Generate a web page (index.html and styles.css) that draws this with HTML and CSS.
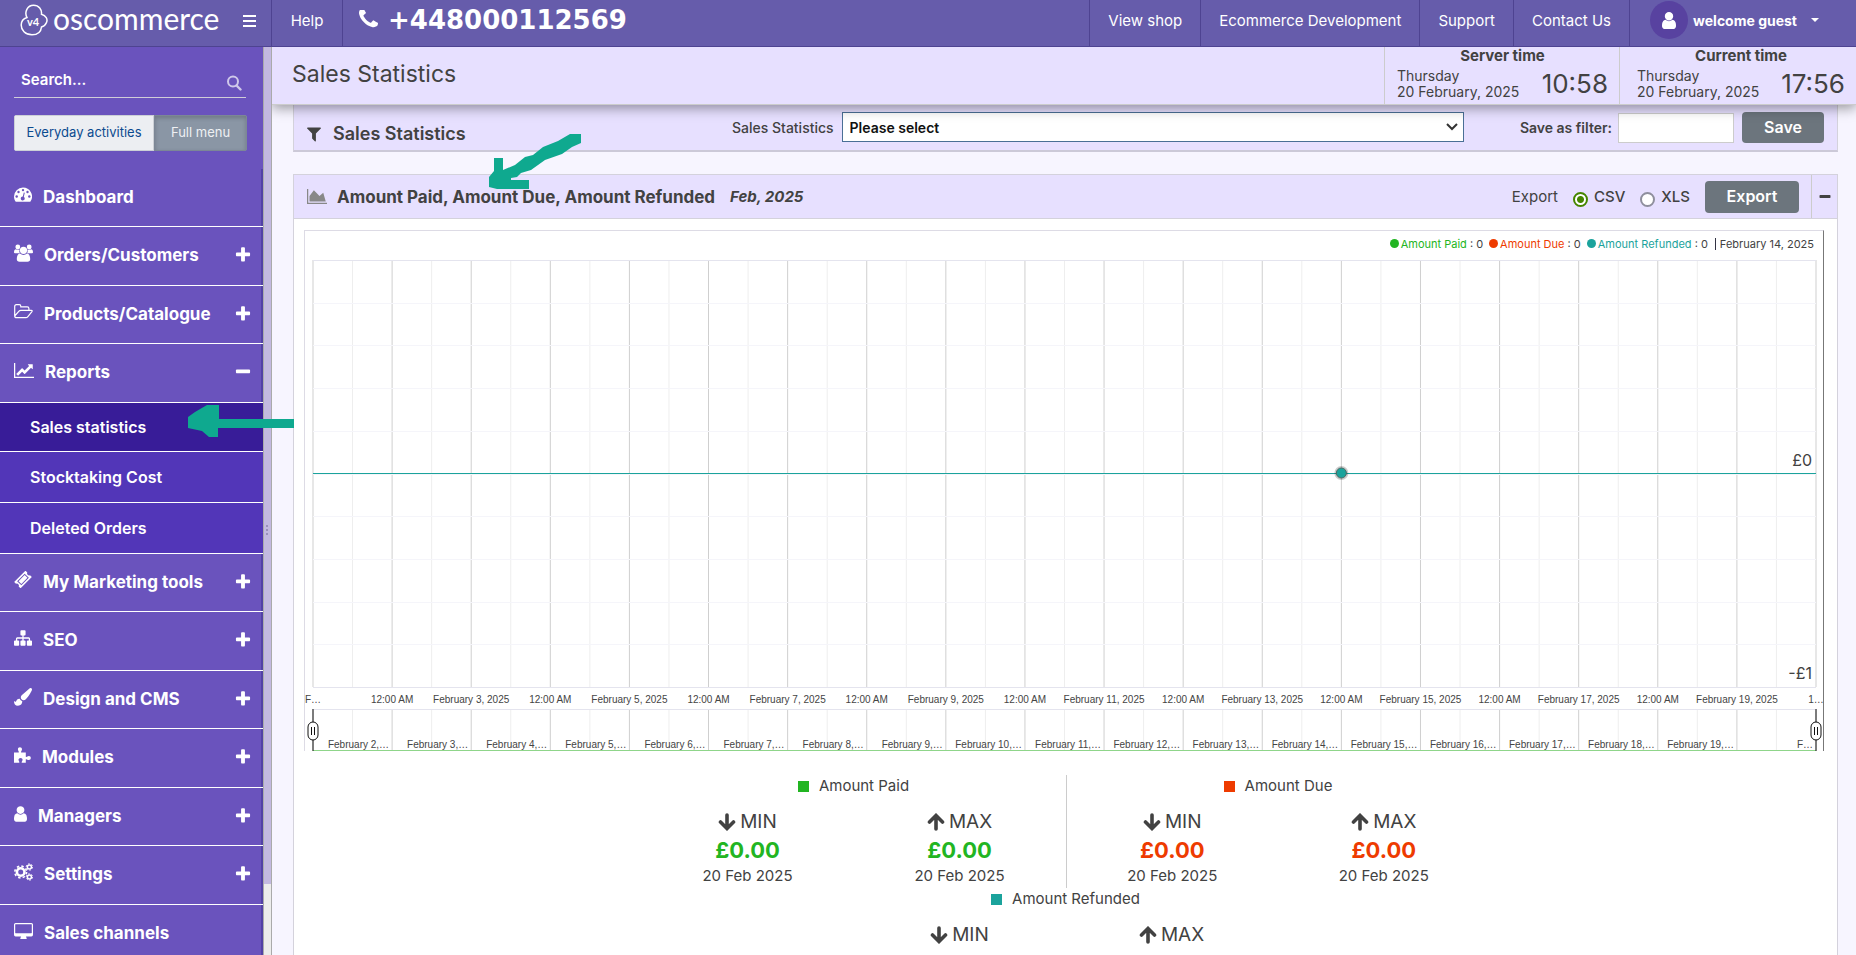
FILE: index.html
```html
<!DOCTYPE html>
<html lang="en">
<head>
<meta charset="utf-8">
<title>Sales Statistics</title>
<link rel="stylesheet" href="styles.css">
</head>
<body>
<svg class="sprite" aria-hidden="true">
  <symbol id="plus" viewBox="0 0 1792 1792"><path d="M1600 736v192q0 40-28 68t-68 28h-416v416q0 40-28 68t-68 28h-192q-40 0-68-28t-28-68v-416h-416q-40 0-68-28t-28-68v-192q0-40 28-68t68-28h416v-416q0-40 28-68t68-28h192q40 0 68 28t28 68v416h416q40 0 68 28t28 68z"/></symbol>
  <symbol id="minus" viewBox="0 0 1792 1792"><path d="M1600 736v192q0 40-28 68t-68 28h-1216q-40 0-68-28t-28-68v-192q0-40 28-68t68-28h1216q40 0 68 28t28 68z"/></symbol>
  <symbol id="user" viewBox="256 128 1280 1536"><path d="M1536 1399q0 109-62.500 187t-150.500 78h-854q-88 0-150.500-78t-62.500-187q0-85 8.500-160.500t31.500-152 58.500-131 94-89 134.500-34.500q131 128 313 128t313-128q76 0 134.500 34.500t94 89 58.500 131 31.500 152 8.500 160.500zm-256-887q0 159-112.500 271.500t-271.500 112.500-271.500-112.500-112.500-271.500 112.500-271.500 271.500-112.500 271.500 112.500 112.500 271.500z"/></symbol>
  <symbol id="down" viewBox="0 0 18 18"><path d="M9 2v13M2.500 9L9 15.500 15.500 9" fill="none" stroke="currentColor" stroke-width="3.600" stroke-linecap="round"/></symbol>
  <symbol id="up" viewBox="0 0 18 18"><path d="M9 16V3M2.500 9L9 2.500 15.500 9" fill="none" stroke="currentColor" stroke-width="3.600" stroke-linecap="round"/></symbol>
</svg>

<header class="topbar">
  <div class="brand">
    <a class="logo" href="#">
      <svg width="28" height="32" viewBox="0 0 28 32" aria-hidden="true">
        <path d="M7 13.500C4 8 7.500 1.200 13.500 1.200c5.500 0 8.500 4.300 8 9C26 11.500 28 15 26.500 18.500c-1 2.500-3 4-5 4.500C21 28 17.500 30.800 12 30.800 5 30.800 1.200 26 1.200 21 1.200 17 4 14.500 7 13.500z" fill="none" stroke="#fff" stroke-width="1.500"/>
        <text x="13" y="22" text-anchor="middle" class="logo-version">v4</text>
      </svg>
      <span class="logo-name">oscommerce</span>
    </a>
    <button class="burger" aria-label="Toggle menu"><span></span><span></span><span></span></button>
  </div>
  <nav class="top-left">
    <a href="#" class="help">Help</a>
    <a href="#" class="phone"><svg width="19" height="19" viewBox="192 256 1408 1408" aria-hidden="true"><path d="M1600 1240q0 27-10 70.500t-21 68.500q-21 50-122 106-94 51-186 51-27 0-52.500-3.500t-57.500-12.500-47.500-14.500-55.500-20.500-49-18q-98-35-175-83-128-79-264.500-215.500t-215.500-264.500q-48-77-83-175-3-9-18-49t-20.500-55.500-14.500-47.500-12.500-57.500-3.500-52.500q0-92 51-186 56-101 106-122 25-11 68.500-21t70.500-10q14 0 21 3 18 6 53 76 11 19 30 54t35 63.500 31 53.500q3 4 17.500 25t21.500 35.500 7 28.500q0 20-28.500 50t-62 55-62 53-28.500 46q0 9 5 22.500t8.500 20.500 14 24 11.500 19q76 137 174 235t235 174q2 1 19 11.500t24 14 20.500 8.500 22.500 5q18 0 46-28.500t53-62 55-62 50-28.500q14 0 28.500 7t35.500 21.500 25 17.500q25 15 53.500 31t63.500 35 54 30q70 35 76 53 3 7 3 21z"/></svg>+448000112569</a>
  </nav>
  <nav class="top-right">
    <a href="#">View shop</a>
    <a href="#">Ecommerce Development</a>
    <a href="#">Support</a>
    <a href="#">Contact Us</a>
    <button class="account"><span class="avatar"><svg width="14" height="17"><use href="#user"/></svg></span>welcome guest<i class="caret"></i></button>
  </nav>
</header>

<div class="body">
  <aside class="sidebar">
    <div class="search">
      <input type="text" placeholder="Search..." aria-label="Search">
      <svg width="16" height="16" viewBox="0 0 16 16" aria-hidden="true"><circle cx="7" cy="6.500" r="5" fill="none" stroke="#cfc8ea" stroke-width="2"/><path d="M10.500 10.500l4 4" stroke="#cfc8ea" stroke-width="2.400" stroke-linecap="round"/></svg>
    </div>
    <div class="switch">
      <button>Everyday activities</button><button class="on">Full menu</button>
    </div>
    <ul class="menu">
      <li><a href="#"><svg width="18" height="15" viewBox="0 0 18 15"><path d="M9 .5a9 9 0 0 0-9 9c0 1.800.5 3.400 1.400 4.800.2.400.5.500.9.500h13.400c.4 0 .7-.1.900-.5A9 9 0 0 0 9 .5z"/><g class="cut"><circle cx="2.700" cy="9.500" r="1.200"/><circle cx="4.500" cy="5" r="1.200"/><circle cx="9" cy="3.100" r="1.200"/><circle cx="13.500" cy="5" r="1.200"/><circle cx="15.300" cy="9.500" r="1.200"/><path d="M9.800 5.500l1 .3-1 4a2 2 0 1 1-1-.3z"/></g></svg>Dashboard</a></li>
      <li><a href="#"><svg width="19" height="18" viewBox="0 0 19 18"><circle cx="3.800" cy="3" r="2.400"/><circle cx="15.200" cy="3" r="2.400"/><path d="M0 8.500C0 6 .8 5.200 2 5.200c1 .8 2.500.8 3.600.2C5 7.500 5.500 8.500 6 9.300H1.500C.5 9.300 0 9 0 8.500zM19 8.500c0-2.500-.8-3.300-2-3.300-1 .8-2.500.8-3.600.2.600 2.100.1 3.100-.4 3.900h4.500c1 0 1.500-.3 1.500-.8z"/><circle cx="9.500" cy="6.300" r="3.600"/><path d="M5.500 17.800c-1.700 0-2.700-1-2.700-2.500 0-3.200 1-5.500 3.200-5.700 2 1.800 5 1.800 7 0 2.200.2 3.200 2.500 3.200 5.700 0 1.500-1 2.500-2.700 2.500z"/></svg>Orders/Customers</a><svg class="toggle"><use href="#plus"/></svg></li>
      <li><a href="#"><svg width="19" height="15" viewBox="0 0 19 15"><path d="M.7 12V2.500Q.7.700 2.400.7h2.800Q6.800.7 6.800 2.300v.6h6.400q1.700 0 1.700 1.700v1.800M.7 12L5 7.200q.7-.8 1.800-.8h10.500q1.500 0 .6 1.200l-4 5q-.9 1.100-2 1.100H2.400Q.7 13.700.7 12z" fill="none" stroke="#fff" stroke-width="1.200"/></svg>Products/Catalogue</a><svg class="toggle"><use href="#plus"/></svg></li>
      <li><a href="#"><svg width="20" height="15" viewBox="0 128 2048 1536"><path d="M2048 1536v128h-2048v-1536h128v1408h1920zm-128-1248v435q0 21-19.500 29.500t-35.500-7.500l-121-121-633 633q-10 10-23 10t-23-10l-233-233-416 416-192-192 585-585q10-10 23-10t23 10l233 233 464-464-121-121q-16-16-7.500-35.500t29.500-19.500h435q14 0 23 9t9 23z"/></svg>Reports</a><svg class="toggle"><use href="#minus"/></svg></li>
    </ul>
    <ul class="submenu">
      <li class="current"><a href="#">Sales statistics</a></li>
      <li><a href="#">Stocktaking Cost</a></li>
      <li><a href="#">Deleted Orders</a></li>
    </ul>
    <ul class="menu">
      <li><a href="#"><svg width="18" height="17" viewBox="0 0 18 17"><g transform="rotate(-45 9 8.500)"><path d="M1 4h16v2.600a2 2 0 0 0 0 3.800V13H1v-2.600a2 2 0 0 0 0-3.800z"/><path d="M4.200 6h9.600v5H4.200z" fill="none" stroke="#6a53bd"/></g></svg>My Marketing tools</a><svg class="toggle"><use href="#plus"/></svg></li>
      <li><a href="#"><svg width="18" height="16" viewBox="0 128 1792 1536"><path d="M1792 1248v320q0 40-28 68t-68 28h-320q-40 0-68-28t-28-68v-320q0-40 28-68t68-28h96v-192h-512v192h96q40 0 68 28t28 68v320q0 40-28 68t-68 28h-320q-40 0-68-28t-28-68v-320q0-40 28-68t68-28h96v-192h-512v192h96q40 0 68 28t28 68v320q0 40-28 68t-68 28h-320q-40 0-68-28t-28-68v-320q0-40 28-68t68-28h96v-192q0-52 38-90t90-38h512v-192h-96q-40 0-68-28t-28-68v-320q0-40 28-68t68-28h320q40 0 68 28t28 68v320q0 40-28 68t-68 28h-96v192h512q52 0 90 38t38 90v192h96q40 0 68 28t28 68z"/></svg>SEO</a><svg class="toggle"><use href="#plus"/></svg></li>
      <li><a href="#"><svg width="18" height="18" viewBox="0 0 18 18"><path d="M16.500.1c.8 0 1.500.6 1.500 1.400 0 .6-.2 1.100-.5 1.600-2 3.800-4 6.800-5.700 8.200-.7.600-1.400.9-2.200.9-1.700 0-2.800-1.400-2.800-3 0-.8.300-1.500.9-2l7.500-6.400c.4-.4.800-.7 1.300-.7z"/><path d="M5.700 10.800c.5 1.100 1.400 2 2.600 2.300 0 2.900-1.600 4.700-4.300 4.700-2.900 0-4-2.100-4-4.800.9.700 1.500 1 2 .5.600-1.700 1.800-2.900 3.700-2.700z"/></svg>Design and CMS</a><svg class="toggle"><use href="#plus"/></svg></li>
      <li><a href="#"><svg width="17" height="16" viewBox="0 0 17 16"><path d="M0 5.500h4.800c.4-1-.9-1.700-.9-3.200C3.900 1 4.700.2 5.900.2S8 1 8 2.300c0 1.500-1.300 2.200-.9 3.200h4.700v4.300c1 .7 1.600-.8 3-.8 1.300 0 2 .9 2 2s-.7 2-2 2c-1.400 0-2-1.300-3-.7v3.500H7.700c-.3-1.400.9-1.600.9-3 0-1.100-.8-1.900-2-1.900s-2.100.8-2.100 1.900c0 1.400 1.200 1.600.8 3H0z"/></svg>Modules</a><svg class="toggle"><use href="#plus"/></svg></li>
      <li><a href="#"><svg width="13" height="16"><use href="#user"/></svg>Managers</a><svg class="toggle"><use href="#plus"/></svg></li>
      <li><a href="#"><svg width="19" height="18" viewBox="0 0 19 18"><g fill="none" stroke="#fff"><circle cx="6.700" cy="9" r="3.800" stroke-width="2.600"/><circle cx="6.700" cy="9" r="5.900" stroke-width="1.600" stroke-dasharray="2.400 2.230"/><circle cx="15.400" cy="4" r="2" stroke-width="1.500"/><circle cx="15.400" cy="4" r="3.200" stroke-width="1" stroke-dasharray="1.600 1.750"/><circle cx="15.400" cy="14" r="2" stroke-width="1.500"/><circle cx="15.400" cy="14" r="3.200" stroke-width="1" stroke-dasharray="1.600 1.750"/></g></svg>Settings</a><svg class="toggle"><use href="#plus"/></svg></li>
      <li><a href="#"><svg width="19" height="16" viewBox="0 0 19 16"><path d="M1.600 0h15.800Q19 0 19 1.600v10.200q0 1.600-1.600 1.600H12q0 .8.700 1.500.5 1.100-.7 1.100H7q-1.200 0-.7-1.100.7-.7.700-1.500H1.600Q0 13.400 0 11.800V1.600Q0 0 1.600 0z"/><path class="cut" d="M1.200 1.600q0-.4.400-.4h15.800q.4 0 .4.400v8.200q0 .4-.4.400H1.600q-.4 0-.4-.4z"/></svg>Sales channels</a></li>
    </ul>
  </aside>
  <div class="splitter"><div class="grip"><i></i><i></i><i></i></div></div>

  <main class="main">
    <div class="page-head">
      <h1>Sales Statistics</h1>
      <div class="clock"><b>Server time</b><div><p>Thursday<br>20 February, 2025</p><time>10:58</time></div></div>
      <div class="clock"><b>Current time</b><div><p>Thursday<br>20 February, 2025</p><time>17:56</time></div></div>
    </div>

    <div class="content">
      <form class="panel filter">
        <h2><svg width="14" height="15" viewBox="190 256 1412 1408" aria-hidden="true"><path d="M1595 295q17 41-14 70l-493 493v742q0 42-39 59-13 5-25 5-27 0-45-19l-256-256q-19-19-19-45v-486l-493-493q-31-29-14-70 17-39 59-39h1280q42 0 59 39z"/></svg>Sales Statistics</h2>
        <div class="choose">
          <label for="preset">Sales Statistics</label>
          <span class="select"><select id="preset"><option>Please select</option></select><svg width="12" height="8" viewBox="0 0 12 8" aria-hidden="true"><path d="M1 1l5 5 5-5" fill="none" stroke="#333" stroke-width="2"/></svg></span>
        </div>
        <div class="save">
          <label for="fname">Save as filter:</label>
          <input id="fname" type="text">
          <button type="button" class="btn">Save</button>
        </div>
      </form>

      <section class="panel report">
        <div class="report-head">
          <svg width="20" height="15" viewBox="0 128 2048 1536" aria-hidden="true"><path fill="#888" d="M2048 1536v128h-2048v-1536h128v1408h1920zm-384-1024l256 896h-1664v-576l448-576 576 576z"/></svg>
          <h2>Amount Paid, Amount Due, Amount Refunded</h2>
          <em>Feb, 2025</em>
          <div class="export">
            <span>Export</span>
            <label><input type="radio" name="format" checked>CSV</label>
            <label><input type="radio" name="format">XLS</label>
            <button class="btn">Export</button>
          </div>
          <button class="collapse" aria-label="Collapse"><svg width="14" height="14"><use href="#minus"/></svg></button>
        </div>

        <div class="chart">
          <div class="legend">
            <span><i class="dot paid"></i><b class="paid">Amount Paid</b> : 0</span>
            <span><i class="dot due"></i><b class="due">Amount Due</b> : 0</span>
            <span><i class="dot refunded"></i><b class="refunded">Amount Refunded</b> : 0</span>
            <span class="date">February 14, 2025</span>
          </div>
          <svg class="plot" id="plot"></svg>
          <svg class="range" id="range"></svg>
        </div>

        <div class="stats">
          <div class="stat">
            <h3><i class="box paid"></i>Amount Paid</h3>
            <dl class="paid"><dt><svg width="18" height="18"><use href="#down"/></svg>MIN</dt><dd>£0.00</dd><dd class="when">20 Feb 2025</dd></dl>
            <dl class="paid"><dt><svg width="18" height="18"><use href="#up"/></svg>MAX</dt><dd>£0.00</dd><dd class="when">20 Feb 2025</dd></dl>
          </div>
          <div class="stat">
            <h3><i class="box due"></i>Amount Due</h3>
            <dl class="due"><dt><svg width="18" height="18"><use href="#down"/></svg>MIN</dt><dd>£0.00</dd><dd class="when">20 Feb 2025</dd></dl>
            <dl class="due"><dt><svg width="18" height="18"><use href="#up"/></svg>MAX</dt><dd>£0.00</dd><dd class="when">20 Feb 2025</dd></dl>
          </div>
          <div class="stat">
            <h3><i class="box refunded"></i>Amount Refunded</h3>
            <dl class="refunded"><dt><svg width="18" height="18"><use href="#down"/></svg>MIN</dt></dl>
            <dl class="refunded"><dt><svg width="18" height="18"><use href="#up"/></svg>MAX</dt></dl>
          </div>
        </div>
      </section>
    </div>
  </main>
</div>

<svg class="marks" width="600" height="450" viewBox="0 0 600 450" aria-hidden="true">
  <path d="M489 177L494 171V158H503V170L515 165 525 157 533 155 543 147 558 141 570 134H581V143L572 147 562 154 545 160 531 170 521 173 517 177 511 178V180H529V189H497L489 187z"/>
  <path d="M188 417L195 412 207 405H219V419H294V428H218V437H209L202 431 188 428z"/>
</svg>
<script src="chart.js"></script>
</body>
</html>
```
FILE: styles.css
```css
* { box-sizing: border-box; }
html, body { height: 100%; margin: 0; }
body {
  display: flex; flex-direction: column; overflow: hidden;
  font-family: Inter, "Liberation Sans", sans-serif; font-size: 15px; color: #424242;
}
a { color: inherit; text-decoration: none; }
button, input, select { font: inherit; color: inherit; margin: 0; }
button { border: 0; background: none; padding: 0; cursor: pointer; }
svg { fill: currentColor; flex: none; }
h1, h2, h3, p, dl, dd, ul { margin: 0; padding: 0; }
ul { list-style: none; }
.sprite { position: absolute; width: 0; height: 0; }

/* top bar */
.topbar { display: flex; flex: none; height: 47px; background: #665cab; border-bottom: 1px solid #4e4391; color: #fff; }
.brand { width: 271px; display: flex; align-items: center; justify-content: space-between; padding: 0 15px 7px 20px; }
.logo { display: flex; align-items: center; gap: 5px; }
.logo-name { font: 400 30px/32px Lato, sans-serif; padding-bottom: 4px; }
.logo-version { font: 700 11px Lato, sans-serif; fill: #fff; }
.burger { display: flex; flex-direction: column; gap: 3px; padding-top: 2px; }
.burger span { width: 13px; height: 2px; background: #fff; }
.top-left, .top-right { display: flex; }
.top-left a, .top-right a, .account { display: flex; align-items: center; padding: 0 18px 6px; border-left: 1px solid #4e4391; }
.help { width: 71px; justify-content: center; }
.top-left .phone { font: 700 26px/40px "DejaVu Sans", sans-serif; gap: 10px; padding: 0 16px 7px; }
.top-right { margin-left: auto; }
.account { font-size: 14px; font-weight: 700; gap: 5px; padding: 0 37px 6px 20px; }
.avatar { width: 38px; height: 38px; border-radius: 50%; background: #5842a0; display: grid; place-items: center; }
.caret { border: 4px solid transparent; border-top-color: #fff; border-bottom: 0; margin-left: 9px; }

.body { flex: 1; display: flex; min-height: 0; }

/* sidebar */
.sidebar { width: 263px; flex: none; background: #6a53bd; color: #fff; overflow: hidden; }
.search { display: flex; align-items: center; margin: 14px 17px 17px 14px; padding: 0 4px 0 7px; height: 37px; border-bottom: 1px solid #d0cdd8; }
.search input { flex: 1; min-width: 0; border: 0; background: none; padding: 0; outline: 0; font-weight: 600; }
.search input::placeholder { color: #fff; opacity: 1; }
.search svg { margin-top: 8px; }
.switch { display: flex; margin: 0 16px 18px 14px; height: 36px; border-radius: 3px; overflow: hidden; font-size: 13px; }
.switch button { background: #eceef2; color: #0b4a8f; width: 140px; border: 1px solid #ccd0d6; padding-bottom: 2px; }
.switch .on { flex: 1; background: #8a96a5; color: #eef0f3; border-color: #7c8796; box-shadow: inset 0 2px 4px #0003; }
.menu li { display: flex; align-items: center; height: 58px; padding: 0 11px 2px 14px; border-bottom: 1px solid #fff; box-shadow: inset -2px 0 #5241a5; font-size: 17px; font-weight: 700; }
.menu li:nth-child(even) { height: 59px; }
.menu a { flex: 1; display: flex; align-items: center; gap: 11px; }
.menu a svg { margin-bottom: 4px; }
.menu .toggle { width: 18px; height: 18px; }
.menu .cut { fill: #6a53bd; }
.submenu li { height: 51px; border-bottom: 1px solid #fff; background: #5236b8; font-size: 16px; font-weight: 600; display: flex; align-items: center; padding-left: 30px; }
.submenu .current { height: 49px; background: #381c98; }
.splitter { width: 9px; flex: none; position: relative; border: solid #aaa; border-width: 0 1px; background: linear-gradient(#c3b9e0 837px, #ececec 837px); }
.grip { position: absolute; top: 478px; left: 2px; display: grid; gap: 2px; }
.grip i { width: 2px; height: 2px; background: #9a90bb; }

/* page */
.main { flex: 1; min-width: 0; background: #f7f5ff; display: flex; flex-direction: column; overflow: hidden; }
.page-head { flex: none; display: flex; height: 58px; background: #e7e0ff; border-bottom: 1px solid #ccc; box-shadow: 0 3px 12px #0006; position: relative; z-index: 1; }
.page-head h1 { flex: 1; font-size: 23px; font-weight: 400; line-height: 54px; padding-left: 20px; }
.clock { width: 235px; padding: 0 11px 0 12px; border-left: 1px solid #ccc; text-align: center; }
.clock + .clock { width: 237px; padding-left: 17px; }
.clock b { display: block; font-weight: 700; line-height: 17px; }
.clock div { display: flex; justify-content: space-between; align-items: center; text-align: left; padding-top: 4px; }
.clock p { font-size: 14px; line-height: 16px; }
.clock time { font-size: 26px; line-height: 32px; }
.content { padding: 0 18px 0 21px; }
.panel { border: 1px solid #d4d2dc; background: #fff; }
.btn { background: #6c757d; color: #fff; font-weight: 600; border-radius: 4px; height: 32px; font-size: 16px; padding-bottom: 1px; }
.filter { display: flex; align-items: flex-start; justify-content: space-between; height: 47px; padding: 7px 13px 0; border-top: 0; border-bottom: 2px solid #ccc9d8; background: #e7e0ff; }
.filter h2 { width: 424px; display: flex; align-items: center; gap: 12px; padding-top: 11px; font-size: 18px; line-height: 22px; font-weight: 600; }
.choose { flex: 1; display: flex; align-items: center; gap: 8px; font-size: 14px; font-weight: 500; padding-left: 1px; }
.select { flex: 1; max-width: 622px; position: relative; }
.select select { width: 100%; height: 30px; appearance: none; border: 1px solid #4a6f96; background: #fff; padding: 0 7px; font-weight: 600; color: #111; border-radius: 0; }
.select svg { position: absolute; right: 6px; top: 11px; }
.save { display: flex; align-items: center; font-size: 14px; font-weight: 600; }
.save input { width: 116px; height: 30px; border: 1px solid #ccc; background: #fff; margin: 0 8px 0 6px; }
.save .btn { width: 82px; height: 31px; }
.report { margin-top: 22px; height: 1000px; }
.report-head { display: flex; align-items: center; height: 44px; background: #e7e0ff; border-bottom: 1px solid #d4d2dc; padding-left: 13px; }
.report-head h2 { font-size: 17px; font-weight: 700; margin: 0 15px 0 10px; }
.report-head em { font-size: 15px; font-weight: 700; }
.export { display: flex; align-items: center; margin-left: auto; }
.export label { display: flex; align-items: center; margin-left: 15px; font-weight: 500; }
.export input { appearance: none; width: 15px; height: 15px; margin: 6px 6px 0 0; border: 2px solid #8f8f9d; border-radius: 50%; background: #fff; }
.export input:checked { border-color: #458500; background: radial-gradient(#458500 3px, #fff 4px); }
.export .btn { width: 94px; margin: 0 12px 0 15px; }
.collapse { width: 26px; align-self: stretch; border-left: 1px solid #ccc; display: grid; place-items: center; }

/* chart */
.chart { margin: 11px 13px 0 10px; border: 1px solid #dddbe5; border-right: 1px solid #777; border-bottom: 0; padding: 0 7px 0 8px; }
.legend { display: flex; justify-content: flex-end; gap: 6px; height: 29px; font-size: 11px; white-space: pre; padding: 0 2px 4px 0; }
.legend b { font-weight: 400; }
.legend span { display: flex; align-items: center; }
.legend .date::before { content: ""; height: 12px; border-left: 1px solid #334; margin: 0 4px 0 1px; }
.dot { width: 9px; height: 9px; border-radius: 50%; margin-right: 2px; background: currentColor; }
.box { width: 11px; height: 11px; background: currentColor; }
.paid { color: #22b522; }
.due { color: #ee3b00; }
.refunded { color: #1ba39c; }
.plot, .range { display: block; width: 100%; overflow: visible; }
.plot { height: 449px; }
.range { height: 42px; }
.major { stroke: #cfcfcf; }
.minor { stroke: #eee; }
.row { stroke: #f5f5fa; }
.frame { stroke: #e4e4ee; }
.zero { stroke: #1ba39c; }
.base { stroke: #8fd58a; }
.axis { font: 10px "Liberation Sans", sans-serif; fill: #444; text-anchor: middle; }
.value { font: 16px Inter, sans-serif; fill: #424242; text-anchor: end; }
.axis.end { text-anchor: end; }
.handle { stroke: #111; fill: #fff; }

/* totals */
.stats { display: flex; flex-wrap: wrap; justify-content: center; max-width: 848px; margin: 24px auto 0; }
.stat { width: 424px; display: grid; grid-template-columns: 1fr 1fr; align-content: start; text-align: center; height: 113px; }
.stat + .stat { border-left: 1px solid #ccc; }
.stat:last-child { border: 0; }
.stat h3 { grid-column: 1 / 3; display: flex; align-items: center; justify-content: center; gap: 10px; font-size: 15px; font-weight: 400; line-height: 22px; height: 34px; padding-bottom: 12px; }
.stat h3 .box { color: inherit; }
.stat h3 .paid { color: #22b522; }
.stat h3 .due { color: #ee3b00; }
.stat h3 .refunded { color: #1ba39c; }
.stat dt { display: flex; justify-content: center; align-items: center; gap: 4px; color: #424242; font-size: 19px; line-height: 26px; }
.stat dd { font-size: 22px; font-weight: 700; line-height: 30px; }
.stat dd.when { color: #424242; font-size: 15px; font-weight: 400; line-height: 22px; }

.marks { position: absolute; left: 0; top: 0; z-index: 5; color: #0fa98f; pointer-events: none; }
```
FILE: chart.js
```js
const NS = 'http://www.w3.org/2000/svg';
const DAYS = 19;

function add(parent, tag, attrs, text) {
  const node = document.createElementNS(NS, tag);
  for (const key in attrs) node.setAttribute(key, attrs[key]);
  if (text) node.textContent = text;
  parent.appendChild(node);
  return node;
}
const pct = (n) => n + '%';

const plot = document.getElementById('plot');
const bottom = 427;
for (let i = 0; i <= DAYS * 2; i++) {
  const x = pct(i / (DAYS * 2) * 100);
  add(plot, 'line', { class: i % 2 ? 'minor' : 'major', x1: x, x2: x, y1: 0, y2: bottom });
}
for (let i = 0; i <= 10; i++) {
  const y = Math.round(i * bottom / 10) + 0.5;
  add(plot, 'line', { class: i % 10 ? 'row' : 'frame', x1: 0, x2: '100%', y1: y, y2: y });
}
add(plot, 'line', { class: 'zero', x1: 0, x2: '100%', y1: 213.5, y2: 213.5 });
const spot = pct(13 / DAYS * 100);
add(plot, 'circle', { cx: spot, cy: 213, r: 7, fill: '#0003' });
add(plot, 'circle', { cx: spot, cy: 213, r: 5, fill: '#1ba39c', stroke: '#4a6a64' });
const values = add(plot, 'svg', { x: -4, overflow: 'visible' });
add(values, 'text', { class: 'value', x: '100%', y: 206 }, '£0');
add(values, 'text', { class: 'value', x: '100%', y: 419 }, '-£1');
for (let i = 0; i <= DAYS; i++) {
  let label = i % 2 ? '12:00 AM' : `February ${i + 1}, 2025`;
  if (i === 0) label = 'F…';
  if (i === DAYS) label = '1…';
  add(plot, 'text', { class: 'axis', x: pct(i / DAYS * 100), y: 443 }, label);
}

const range = document.getElementById('range');
for (let i = 0; i <= DAYS * 2; i++) {
  const x = pct(i / (DAYS * 2) * 100);
  add(range, 'line', { class: i % 2 ? 'minor' : 'major', x1: x, x2: x, y1: 0, y2: 42 });
}
add(range, 'line', { class: 'frame', x1: 0, x2: '100%', y1: 0.5, y2: 0.5 });
add(range, 'line', { class: 'base', x1: 0, x2: '100%', y1: 41.5, y2: 41.5 });
const names = add(range, 'svg', { x: -3, overflow: 'visible' });
for (let i = 1; i <= DAYS; i++) {
  add(names, 'text', { class: 'axis end', x: pct(i / DAYS * 100), y: 39 },
    i === DAYS ? 'F…' : `February ${i + 1},…`);
}
for (const x of ['0%', '100%']) {
  add(range, 'line', { class: 'handle', x1: x, x2: x, y1: 0, y2: 42 });
  const grip = add(range, 'svg', { x, overflow: 'visible' });
  add(grip, 'rect', { class: 'handle', x: -5, y: 13, width: 10, height: 18, rx: 5 });
  add(grip, 'path', { class: 'handle', d: 'M-1.500 18v8M1.500 18v8' });
}
```
